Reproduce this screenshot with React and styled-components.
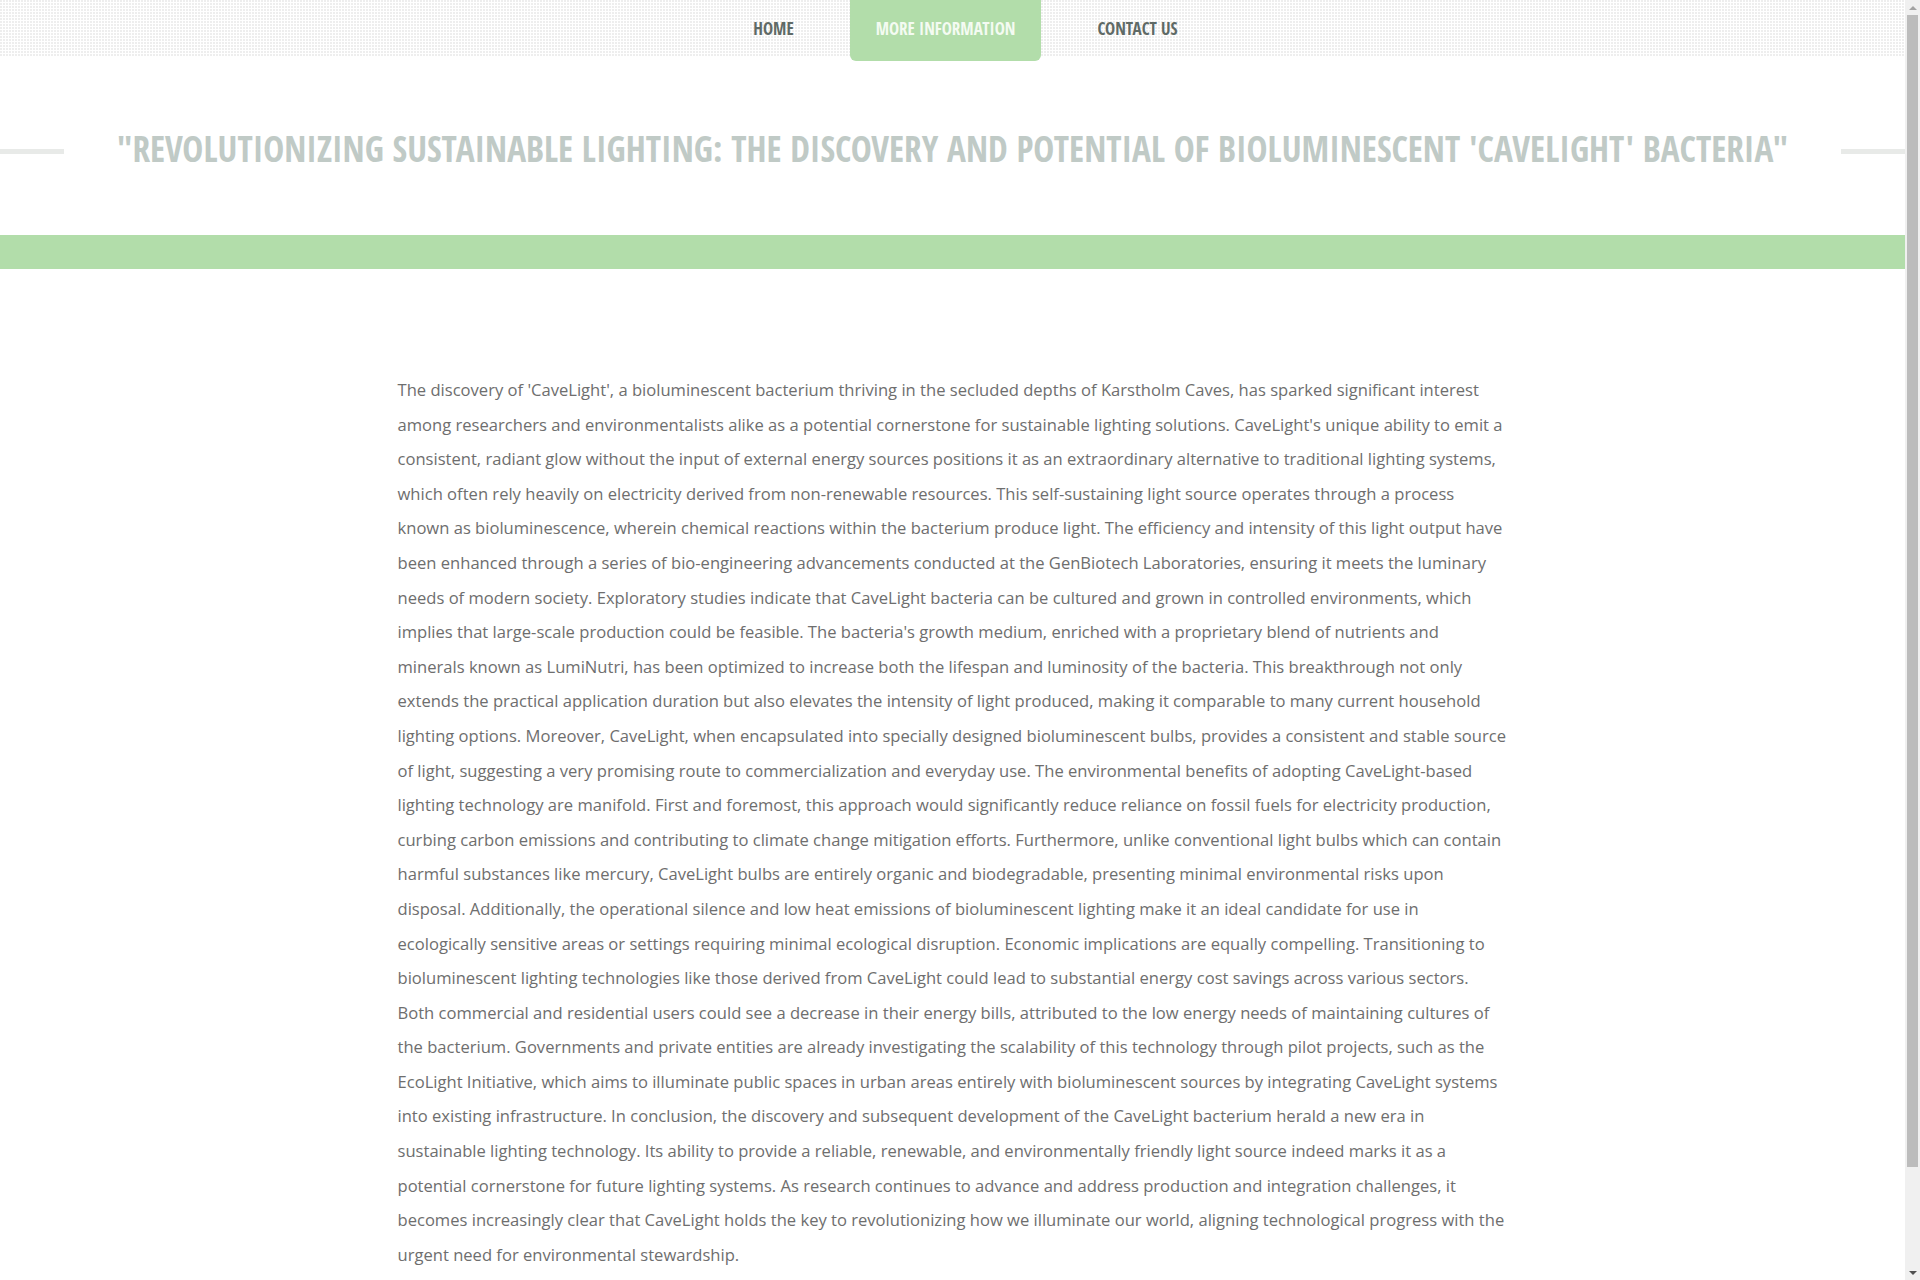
import React from "react";
import styled, { createGlobalStyle } from "styled-components";

const GlobalStyle = createGlobalStyle`
  html, body {
    margin: 0;
    padding: 0;
    background: #fff;
  }
  body {
    font-family: "Open Sans", "Liberation Sans", sans-serif;
    color: #6e6e6e;
  }
  * { box-sizing: border-box; }
`;

const condensed = `"Open Sans Condensed", "Liberation Sans Narrow", "Open Sans", sans-serif`;

const Page = styled.div`
  margin-right: 15px;
`;

const Header = styled.header`
  height: 56px;
  background-color: #fff;
  background-image: linear-gradient(90deg, transparent 2px, #fff 2px),
    linear-gradient(180deg, #eeeeee 2px, #fff 2px);
  background-size: 3px 3px;
`;

const NavList = styled.ul`
  list-style: none;
  margin: 0;
  padding: 0 0 0 26px;
  display: flex;
  justify-content: center;
  gap: 30px;
`;

const NavItem = styled.li`
  height: ${p => (p.$active ? "61px" : "56px")};
  padding: 0 26px ${p => (p.$active ? "4px" : "0")};
  display: flex;
  align-items: center;
  font-family: ${condensed};
  font-stretch: condensed;
  font-weight: 700;
  font-size: 17px;
  text-transform: uppercase;
  color: ${p => (p.$active ? "#f4fbf2" : "#5f6a66")};
  background: ${p => (p.$active ? "#b2ddaa" : "transparent")};
  border-radius: 0 0 6px 6px;
  cursor: pointer;
`;

const TitleRow = styled.div`
  display: flex;
  align-items: center;
  margin-top: 66px;
  height: 52px;
`;

const Rule = styled.span`
  flex: 0 0 64px;
  height: 5px;
  background: #e8eae8;
  margin-top: 6px;
`;

const Title = styled.h1`
  flex: 1;
  margin: 0;
  text-align: center;
  font-family: ${condensed};
  font-stretch: condensed;
  font-weight: 700;
  font-size: 35.3px;
  line-height: 52px;
  color: #c0cac6;
  text-transform: uppercase;
  white-space: nowrap;
`;

const Band = styled.div`
  height: 34px;
  margin-top: 61px;
  background: #b2ddaa;
`;

const Container = styled.main`
  width: 1110px;
  margin: 0 auto;
  padding: 104px 0 117px;
`;

const Paragraph = styled.p`
  margin: 0;
  font-size: 16.58px;
  line-height: 34.6px;
  color: #6e6e6e;
`;

/* the browser's scrollbar is not drawn in the screenshot, so it is drawn here */
const Scrollbar = styled.div`
  position: fixed;
  top: 0;
  right: 0;
  bottom: 0;
  width: 15px;
  background: #f0f0f0;
  display: flex;
  flex-direction: column;
  align-items: center;
`;

const Arrow = styled.div`
  flex: 0 0 15px;
  display: flex;
  align-items: center;
  justify-content: center;
  &::before {
    content: "";
    border-left: 4px solid transparent;
    border-right: 4px solid transparent;
    ${p => (p.$down ? "border-top: 4px solid #505050;" : "border-bottom: 4px solid #a3a3a3;")}
  }
`;

const Track = styled.div`
  flex: 1;
  width: 100%;
  padding: 0 2px;
`;

const Thumb = styled.div`
  height: 1152px;
  background: #bcbcbc;
`;

const text = `The discovery of 'CaveLight', a bioluminescent bacterium thriving in the secluded depths of Karstholm Caves, has sparked significant interest among researchers and environmentalists alike as a potential cornerstone for sustainable lighting solutions. CaveLight's unique ability to emit a consistent, radiant glow without the input of external energy sources positions it as an extraordinary alternative to traditional lighting systems, which often rely heavily on electricity derived from non-renewable resources. This self-sustaining light source operates through a process known as bioluminescence, wherein chemical reactions within the bacterium produce light. The efficiency and intensity of this light output have been enhanced through a series of bio-engineering advancements conducted at the GenBiotech Laboratories, ensuring it meets the luminary needs of modern society. Exploratory studies indicate that CaveLight bacteria can be cultured and grown in controlled environments, which implies that large-scale production could be feasible. The bacteria's growth medium, enriched with a proprietary blend of nutrients and minerals known as LumiNutri, has been optimized to increase both the lifespan and luminosity of the bacteria. This breakthrough not only extends the practical application duration but also elevates the intensity of light produced, making it comparable to many current household lighting options. Moreover, CaveLight, when encapsulated into specially designed bioluminescent bulbs, provides a consistent and stable source of light, suggesting a very promising route to commercialization and everyday use. The environmental benefits of adopting CaveLight-based lighting technology are manifold. First and foremost, this approach would significantly reduce reliance on fossil fuels for electricity production, curbing carbon emissions and contributing to climate change mitigation efforts. Furthermore, unlike conventional light bulbs which can contain harmful substances like mercury, CaveLight bulbs are entirely organic and biodegradable, presenting minimal environmental risks upon disposal. Additionally, the operational silence and low heat emissions of bioluminescent lighting make it an ideal candidate for use in ecologically sensitive areas or settings requiring minimal ecological disruption. Economic implications are equally compelling. Transitioning to bioluminescent lighting technologies like those derived from CaveLight could lead to substantial energy cost savings across various sectors. Both commercial and residential users could see a decrease in their energy bills, attributed to the low energy needs of maintaining cultures of the bacterium. Governments and private entities are already investigating the scalability of this technology through pilot projects, such as the EcoLight Initiative, which aims to illuminate public spaces in urban areas entirely with bioluminescent sources by integrating CaveLight systems into existing infrastructure. In conclusion, the discovery and subsequent development of the CaveLight bacterium herald a new era in sustainable lighting technology. Its ability to provide a reliable, renewable, and environmentally friendly light source indeed marks it as a potential cornerstone for future lighting systems. As research continues to advance and address production and integration challenges, it becomes increasingly clear that CaveLight holds the key to revolutionizing how we illuminate our world, aligning technological progress with the urgent need for environmental stewardship.`;

const links = ["Home", "More Information", "Contact Us"];

export default function App() {
  return (
    <>
      <GlobalStyle />
      <Page>
        <Header>
          <nav>
            <NavList>
              {links.map(l => (
                <NavItem key={l} $active={l === "More Information"}>{l}</NavItem>
              ))}
            </NavList>
          </nav>
        </Header>
        <TitleRow>
          <Rule />
          <Title>"Revolutionizing Sustainable Lighting: The Discovery and Potential of Bioluminescent 'CaveLight' Bacteria"</Title>
          <Rule />
        </TitleRow>
        <Band />
        <Container>
          <Paragraph>{text}</Paragraph>
        </Container>
      </Page>
      <Scrollbar>
        <Arrow />
        <Track><Thumb /></Track>
        <Arrow $down />
      </Scrollbar>
    </>
  );
}
